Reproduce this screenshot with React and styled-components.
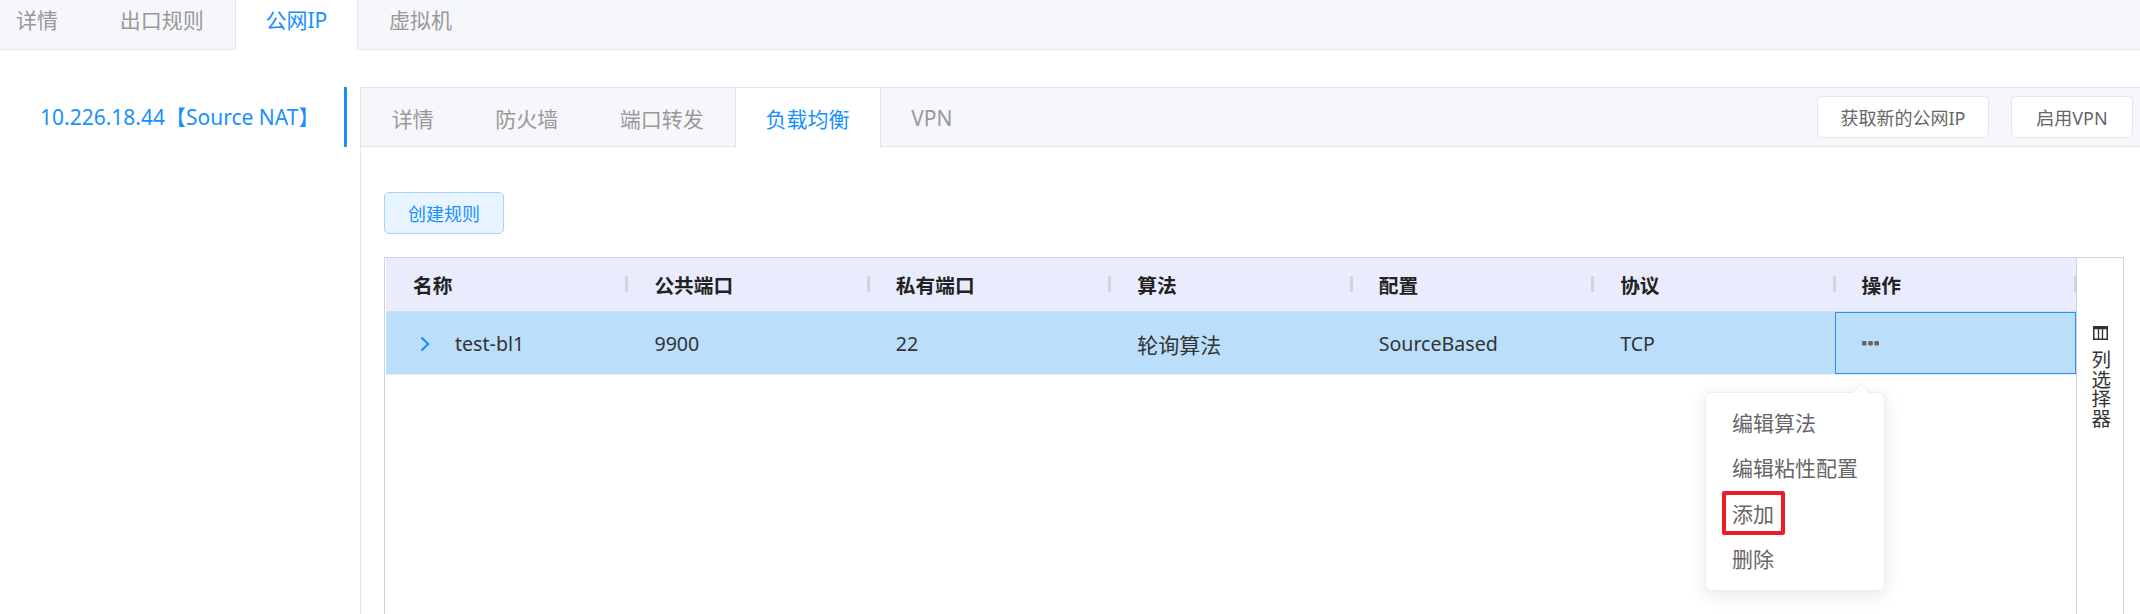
import React from "react";
import styled, { createGlobalStyle } from "styled-components";

const GlobalStyle = createGlobalStyle`
  html, body {
    margin: 0;
    height: 614px;
    overflow: hidden;
    background: #fff;
    font-family: "Noto Sans", "Noto Sans CJK SC", sans-serif;
  }
  *, *::before, *::after {
    box-sizing: border-box;
  }
`;

const columns = ["名称", "公共端口", "私有端口", "算法", "配置", "协议", "操作"];
const row = ["test-bl1", "9900", "22", "轮询算法", "SourceBased", "TCP"];
const menuItems = ["编辑算法", "编辑粘性配置", "添加", "删除"];

function App() {
  return (
    <Page>
      <GlobalStyle />
      <TopTabs>
        <Tab first>详情</Tab>
        <Tab>出口规则</Tab>
        <Tab active>公网IP</Tab>
        <Tab>虚拟机</Tab>
      </TopTabs>
      <Content>
        <Sidebar>
          <SideItem>10.226.18.44【Source NAT】</SideItem>
        </Sidebar>
        <Panel>
          <PanelBar>
            <Tab inner>详情</Tab>
            <Tab inner>防火墙</Tab>
            <Tab inner>端口转发</Tab>
            <Tab inner active>负载均衡</Tab>
            <Tab inner>VPN</Tab>
            <BarActions>
              <BarButton width={172}>获取新的公网IP</BarButton>
              <BarButton width={122}>启用VPN</BarButton>
            </BarActions>
          </PanelBar>
          <PanelBody>
            <CreateButton>创建规则</CreateButton>
            <TableWrap>
              <TableMain>
                <HeadRow>
                  {columns.map((name) => (
                    <HeadCell key={name}>{name}</HeadCell>
                  ))}
                </HeadRow>
                <BodyRow>
                  {row.map((value, index) => (
                    <Cell key={value} cjk={value === "轮询算法"}>
                      {index === 0 && (
                        <Chevron viewBox="0 0 10 16">
                          <polyline points="1.5,1.5 8,8 1.5,14.5" />
                        </Chevron>
                      )}
                      {value}
                    </Cell>
                  ))}
                  <ActionCell>
                    <svg width="17" height="5" viewBox="0 0 17 5" fill="#666">
                      <rect x="0" width="4.6" height="4.6" rx="1" />
                      <rect x="6.2" width="4.6" height="4.6" rx="1" />
                      <rect x="12.4" width="4.6" height="4.6" rx="1" />
                    </svg>
                    <Popup>
                      {menuItems.map((item) => (
                        <MenuItem key={item} marked={item === "添加"}>
                          <span>{item}</span>
                        </MenuItem>
                      ))}
                    </Popup>
                  </ActionCell>
                </BodyRow>
              </TableMain>
              <ColumnPicker>
                <svg width="15" height="14" viewBox="0 0 15 14" fill="none" stroke="#333">
                  <rect x="0.75" y="0.75" width="13.5" height="12.5" strokeWidth="1.5" />
                  <path d="M0 2h15" strokeWidth="2.5" />
                  <path d="M5.5 1v12M9.5 1v12" strokeWidth="1.3" />
                </svg>
                <PickerLabel>列选择器</PickerLabel>
              </ColumnPicker>
            </TableWrap>
          </PanelBody>
        </Panel>
      </Content>
    </Page>
  );
}

export default App;

const Page = styled.div`
  width: 2140px;
  height: 614px;
  overflow: hidden;
  display: flex;
  flex-direction: column;
`;

const TopTabs = styled.div`
  height: 50px;
  flex: none;
  display: flex;
  background: #f5f7fb;
  border-bottom: 1px solid #e2e6ee;
`;

const tabPadding = (props) => {
  const side = props.active ? "30px" : "30.75px";
  if (props.inner) return `0 ${side}`;
  if (props.first) return "0 31px 13px 16px";
  return `0 ${side} 13px`;
};

const Tab = styled.div`
  height: ${(props) => (props.inner ? "60px" : "50px")};
  padding: ${tabPadding};
  display: flex;
  align-items: center;
  font-size: 21px;
  white-space: nowrap;
  color: ${(props) => (props.active ? "#1890ff" : "#999")};
  background: ${(props) => (props.active ? "#fff" : "transparent")};
  border-left: ${(props) => (props.active ? "1px solid #e2e6ee" : "0")};
  border-right: ${(props) => (props.active ? "1px solid #e2e6ee" : "0")};
`;

const Content = styled.div`
  flex: 1;
  display: flex;
  padding-top: 37px;
  min-height: 0;
`;

const Sidebar = styled.div`
  width: 360px;
  flex: none;
  padding-right: 13px;
`;

const SideItem = styled.div`
  height: 60px;
  padding: 0 0 2px 40px;
  display: flex;
  align-items: center;
  font-size: 21px;
  white-space: nowrap;
  color: #1890ff;
  border-right: 3px solid #1890ff;
`;

const Panel = styled.div`
  flex: 1;
  min-width: 0;
  display: flex;
  flex-direction: column;
  border-left: 1px solid #dfe3ea;
`;

const PanelBar = styled.div`
  height: 60px;
  flex: none;
  display: flex;
  background: #f5f7fb;
  border-top: 1px solid #dfe3ea;
  border-bottom: 1px solid #e2e6ee;
`;

const BarActions = styled.div`
  margin-left: auto;
  padding: 8px 7px 0 0;
  display: flex;
  gap: 22px;
`;

const BarButton = styled.button`
  width: ${(props) => props.width}px;
  height: 42px;
  padding: 0;
  font: inherit;
  font-size: 18px;
  white-space: nowrap;
  color: #666;
  background: #fff;
  border: 1px solid #e2e6ee;
  border-radius: 5px;
`;

const PanelBody = styled.div`
  flex: 1;
  min-height: 0;
  padding: 45px 16px 0 23px;
  display: flex;
  flex-direction: column;
  align-items: flex-start;
  gap: 23px;
`;

const CreateButton = styled.button`
  width: 120px;
  height: 42px;
  flex: none;
  padding: 0;
  font: inherit;
  font-size: 18px;
  color: #1890ff;
  background: #e8f4ff;
  border: 1px solid #a3d3ff;
  border-radius: 5px;
`;

const TableWrap = styled.div`
  align-self: stretch;
  flex: 1;
  display: flex;
  border: 1px solid #cdd4e2;
  border-bottom: 0;
`;

const TableMain = styled.div`
  flex: 1;
  min-width: 0;
  padding-left: 1px;
`;

const HeadRow = styled.div`
  height: 54px;
  display: grid;
  grid-template-columns: repeat(7, 1fr);
  background: #e8ecfc;
  border-bottom: 1px solid #d5dbe8;
`;

const HeadCell = styled.div`
  position: relative;
  padding-left: 27px;
  display: flex;
  align-items: center;
  font-size: 19.7px;
  font-weight: 700;
  color: #222;

  &::after {
    content: "";
    position: absolute;
    right: -1px;
    top: 18px;
    width: 3px;
    height: 16px;
    background: #d0d4dc;
  }
`;

const BodyRow = styled.div`
  height: 63px;
  display: grid;
  grid-template-columns: repeat(7, 1fr);
  background: #bbdefb;
  border-bottom: 1px solid #e4ecf6;
`;

const Cell = styled.div`
  padding: 1px 0 0 27px;
  display: flex;
  align-items: center;
  font-size: ${(props) => (props.cjk ? "21px" : "19.6px")};
  color: #333;
`;

const Chevron = styled.svg`
  width: 10px;
  height: 16px;
  margin: 0 25px 0 7px;
  flex: none;
  fill: none;
  stroke: #1890ff;
  stroke-width: 2.2;
`;

const ActionCell = styled.div`
  position: relative;
  padding-left: 26px;
  display: flex;
  align-items: center;
  border: 1.5px solid #2f90ea;
`;

const Popup = styled.div`
  position: absolute;
  top: 78.5px;
  left: -130.5px;
  width: 180px;
  height: 199px;
  padding: 7px 0 0 26px;
  background: #fff;
  border: 1px solid #e9edf5;
  border-radius: 6px;
  box-shadow: 0 4px 18px rgba(40, 60, 110, 0.12);
  z-index: 2;

  &::before {
    content: "";
    position: absolute;
    top: -6px;
    left: 149px;
    width: 12px;
    height: 12px;
    background: #fff;
    transform: rotate(45deg);
    box-shadow: -1px -1px 1px rgba(40, 60, 110, 0.06);
  }
`;

const MenuItem = styled.div`
  position: relative;
  height: 45.3px;
  display: flex;
  align-items: center;
  font-size: 21px;
  white-space: nowrap;
  color: #666;

  ${(props) =>
    props.marked &&
    `
    &::after {
      content: "";
      position: absolute;
      left: -10px;
      top: 1px;
      width: 63px;
      height: 44px;
      border: 4px solid #ee1c25;
      border-radius: 2px;
    }
  `}
`;

const ColumnPicker = styled.div`
  width: 47px;
  flex: none;
  padding-top: 68px;
  display: flex;
  flex-direction: column;
  align-items: center;
  gap: 10px;
  border-left: 1px solid #cdd4e2;
`;

const PickerLabel = styled.div`
  writing-mode: vertical-rl;
  text-orientation: upright;
  font-size: 19.5px;
  line-height: 1;
  color: #333;
`;
